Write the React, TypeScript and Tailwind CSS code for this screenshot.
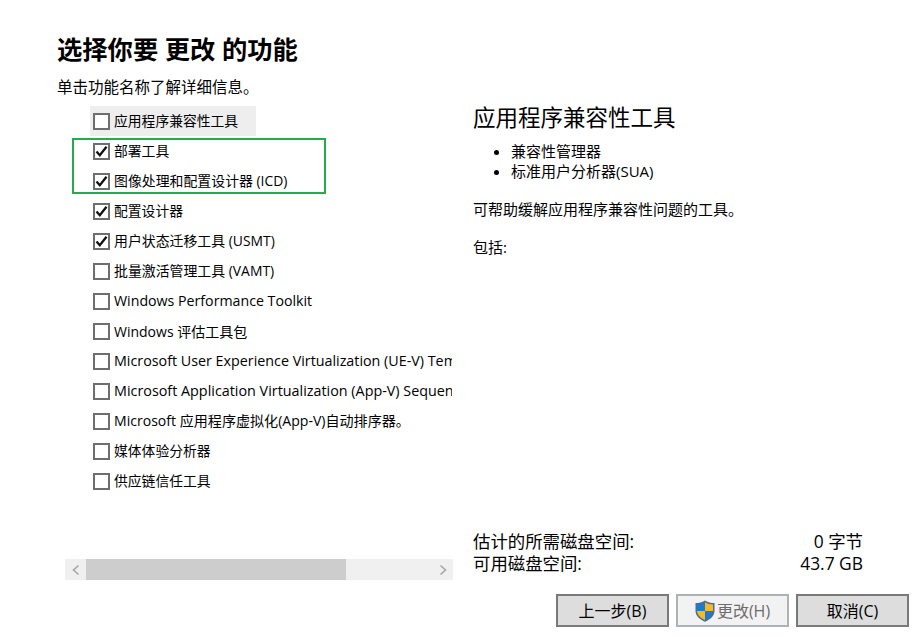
import React from "react";

const font = { fontFamily: '"Open Sans", "Noto Sans CJK SC", sans-serif' };

const rows: [string, boolean, string][] = [
  ["应用程序兼容性工具", false, "text-[13.8px]"],
  ["部署工具", true, "text-[13.8px]"],
  ["图像处理和配置设计器 (ICD)", true, "text-[13.9px]"],
  ["配置设计器", true, "text-[13.8px]"],
  ["用户状态迁移工具 (USMT)", true, "text-[13.9px]"],
  ["批量激活管理工具 (VAMT)", false, "text-[13.9px]"],
  ["Windows Performance Toolkit", false, "text-[14.2px]"],
  ["Windows 评估工具包", false, "text-[14px]"],
  ["Microsoft User Experience Virtualization (UE-V) Template Generator", false, "text-[14.3px]"],
  ["Microsoft Application Virtualization (App-V) Sequencer", false, "text-[14.35px]"],
  ["Microsoft 应用程序虚拟化(App-V)自动排序器。", false, "text-[14.07px]"],
  ["媒体体验分析器", false, "text-[13.8px]"],
  ["供应链信任工具", false, "text-[13.8px]"],
];

function Check({ checked }: { checked: boolean }) {
  return (
    <span className="flex h-[17px] w-[17px] shrink-0 items-center justify-center border-2 border-[#6e6e6e] bg-white">
      {checked && (
        <svg width="13" height="13" viewBox="0 0 13 13" fill="none">
          <path d="M1.5 6.5 L4.8 10.2 L11.5 1.8" stroke="#111111" strokeWidth="2.3" />
        </svg>
      )}
    </span>
  );
}

function Btn({ children, disabled }: { children: React.ReactNode; disabled?: boolean }) {
  return (
    <div
      className={`flex h-[33px] w-[113px] items-center justify-center border-2 text-[16px] ${
        disabled ? "border-[#adb2b5] bg-[#f2f2f2] text-[#6d6d6d]" : "border-[#7a7a7a] bg-[#dddddd] text-black"
      }`}
    >
      {children}
    </div>
  );
}

export default function App() {
  return (
    <div style={font} className="relative flex h-[641px] w-[920px] flex-col overflow-hidden bg-white text-black">
      <h1 className="ml-[57px] mt-[32px] h-[34px] text-[25.3px] leading-[34px] font-bold">选择你要 更改 的功能</h1>
      <p className="ml-[57px] mt-[10px] h-[22px] text-[15.5px] leading-[22px]">单击功能名称了解详细信息。</p>
      <div className="flex flex-1">
        <div className="flex w-[473px] flex-col">
          <ul className="ml-[90px] mt-[8px] h-[423px] w-[362px] overflow-hidden">
            {rows.map(([label, checked, size], i) => (
              <li
                key={label}
                className={`flex h-[30px] items-center gap-[4px] pl-[3px] whitespace-nowrap ${size} ${i === 0 ? "w-[166px] bg-[#eeeeee]" : ""}`}
              >
                <Check checked={checked} />
                <span>{label}</span>
              </li>
            ))}
          </ul>
          <div className="ml-[65px] mt-[30px] flex h-[21px] w-[388px] items-center bg-[#f0f0f0]">
            <span className="flex w-[21px] justify-center">
              <svg width="10" height="12" viewBox="0 0 10 12" fill="none">
                <path d="M7.5 1.5 L2.5 6 L7.5 10.5" stroke="#a6a6a6" strokeWidth="1.6" />
              </svg>
            </span>
            <span className="h-full w-[260px] bg-[#cdcdcd]" />
            <span className="flex-1" />
            <span className="flex w-[21px] justify-center">
              <svg width="10" height="12" viewBox="0 0 10 12" fill="none">
                <path d="M2.5 1.5 L7.5 6 L2.5 10.5" stroke="#a6a6a6" strokeWidth="1.6" />
              </svg>
            </span>
          </div>
        </div>
        <div className="flex w-[390px] flex-col text-[15px]">
          <h2 className="mt-[3px] h-[34px] text-[22.5px] leading-[34px]">应用程序兼容性工具</h2>
          <ul className="mt-[6px] ml-[22px] list-disc pl-[16px] leading-[20px]">
            <li>兼容性管理器</li>
            <li>标准用户分析器(SUA)</li>
          </ul>
          <p className="mt-[18px] leading-[20px]">可帮助缓解应用程序兼容性问题的工具。</p>
          <p className="mt-[18px] leading-[20px]">包括:</p>
          <div className="mt-auto mb-[13px] text-[17.4px] leading-[22px]">
            <div className="flex justify-between">
              <span>估计的所需磁盘空间:</span>
              <span>0 字节</span>
            </div>
            <div className="flex justify-between">
              <span>可用磁盘空间:</span>
              <span>43.7 GB</span>
            </div>
          </div>
        </div>
      </div>
      <div className="mb-[14px] mt-[7px] flex justify-end gap-[7px] pr-[11px]">
        <Btn>上一步(B)</Btn>
        <Btn disabled>
          <svg width="20" height="22" viewBox="0 0 20 22" className="mr-[2px]">
            <path d="M10 0.5 C7 2.5 4 3 0.5 3 V11 C0.5 16 5 19.5 10 21.8 C15 19.5 19.5 16 19.5 11 V3 C16 3 13 2.5 10 0.5Z" fill="#4a6f95" />
            <path d="M10 2.2 V11 H2 V4.4 C5 4.4 7.6 3.8 10 2.2Z" fill="#1f78d1" />
            <path d="M10 2.2 C12.4 3.8 15 4.4 18 4.4 V11 H10Z" fill="#f6bb24" />
            <path d="M2 11 H10 V20 C6 18.2 2.4 15.4 2 11Z" fill="#f6bb24" />
            <path d="M10 11 H18 C17.6 15.4 14 18.2 10 20Z" fill="#1f78d1" />
          </svg>
          更改(H)
        </Btn>
        <Btn>取消(C)</Btn>
      </div>
      <div className="pointer-events-none absolute left-[72px] top-[138px] h-[56px] w-[254px] border-2 border-[#22ac4e]" />
    </div>
  );
}
